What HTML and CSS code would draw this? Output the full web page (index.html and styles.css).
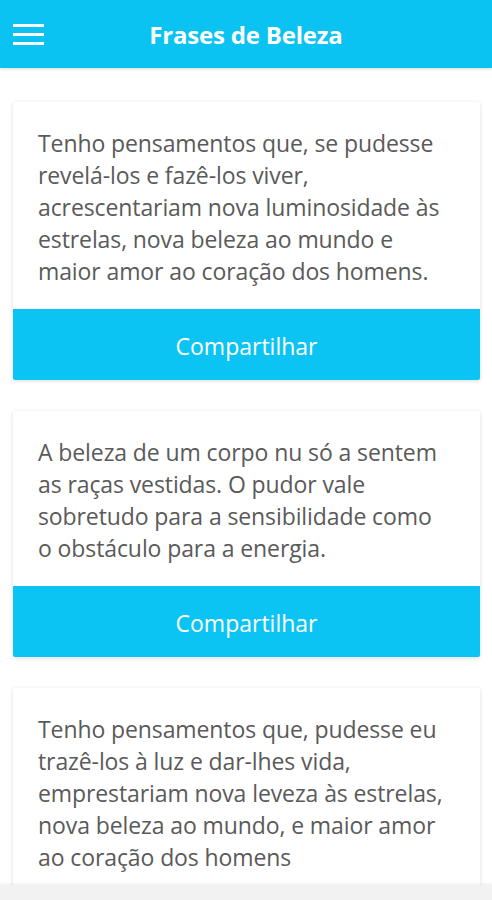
FILE: index.html
```html
<!DOCTYPE html>
<html lang="pt">
<head>
  <meta charset="UTF-8">
  <meta name="viewport" content="width=device-width, initial-scale=1.0">
  <link rel="stylesheet" href="styles.css">
  <title>Frases de Beleza</title>
</head>
<body>
  <div class="app">
    <header class="topbar">
      <button class="menuBtn" aria-label="Menu">
        <svg width="31" height="21" viewBox="0 0 31 21">
          <rect x="0" y="0" width="31" height="3" fill="#fff"/>
          <rect x="0" y="9" width="31" height="3" fill="#fff"/>
          <rect x="0" y="18" width="31" height="3" fill="#fff"/>
        </svg>
      </button>
      <h1 class="title">Frases de Beleza</h1>
    </header>

    <main class="content">
      <div class="quoteCard">
        <p class="quoteText">Tenho pensamentos que, se pudesse<br>revelá-los e fazê-los viver,<br>acrescentariam nova luminosidade às<br>estrelas, nova beleza ao mundo e<br>maior amor ao coração dos homens.</p>
        <button class="shareBtn">Compartilhar</button>
      </div>

      <div class="quoteCard">
        <p class="quoteText">A beleza de um corpo nu só a sentem<br>as raças vestidas. O pudor vale<br>sobretudo para a sensibilidade como<br>o obstáculo para a energia.</p>
        <button class="shareBtn">Compartilhar</button>
      </div>

      <div class="quoteCard">
        <p class="quoteText">Tenho pensamentos que, pudesse eu<br>trazê-los à luz e dar-lhes vida,<br>emprestariam nova leveza às estrelas,<br>nova beleza ao mundo, e maior amor<br>ao coração dos homens</p>
      </div>
    </main>

    <div class="bottomBar"></div>
  </div>
</body>
</html>
```

FILE: styles.css
```css
html, body {
  margin: 0;
  padding: 0;
  height: 100%;
}

body {
  font-family: "Open Sans", "Noto Sans", sans-serif;
  background-color: #fff;
  color: #5a5a5a;
}

.app {
  display: flex;
  flex-direction: column;
  height: 100vh;
  overflow: hidden;
}

.topbar {
  flex: 0 0 68px;
  display: flex;
  align-items: center;
  justify-content: center;
  position: relative;
  background-color: #0bc3f2;
  box-shadow: 0 1px 3px rgba(0, 0, 0, 0.15);
  z-index: 1;
}

.menuBtn {
  position: absolute;
  left: 13px;
  top: 24px;
  padding: 0;
  border: none;
  background: none;
  line-height: 0;
}

.title {
  margin: 0;
  color: #fff;
  font-size: 24px;
  font-weight: 700;
  letter-spacing: -0.2px;
}

.content {
  flex: 1;
  overflow: hidden;
  padding: 34px 12px 0 13px;
}

.quoteCard {
  background-color: #fff;
  box-shadow: 0 1px 4px rgba(0, 0, 0, 0.14);
  border-radius: 2px;
  margin-bottom: 31px;
}

.quoteText {
  margin: 0;
  padding: 25px 0 22px 25px;
  font-size: 23px;
  line-height: 32px;
  letter-spacing: -0.1px;
  white-space: nowrap;
}

.shareBtn {
  display: block;
  width: 100%;
  height: 71px;
  border: none;
  border-radius: 0 0 2px 2px;
  background-color: #0bc4f4;
  color: #fff;
  font-family: inherit;
  font-size: 23px;
  padding-top: 4px;
}

.bottomBar {
  flex: 0 0 15px;
  background-color: #f2f2f2;
  box-shadow: 0 -1px 3px rgba(0, 0, 0, 0.08);
}
```
